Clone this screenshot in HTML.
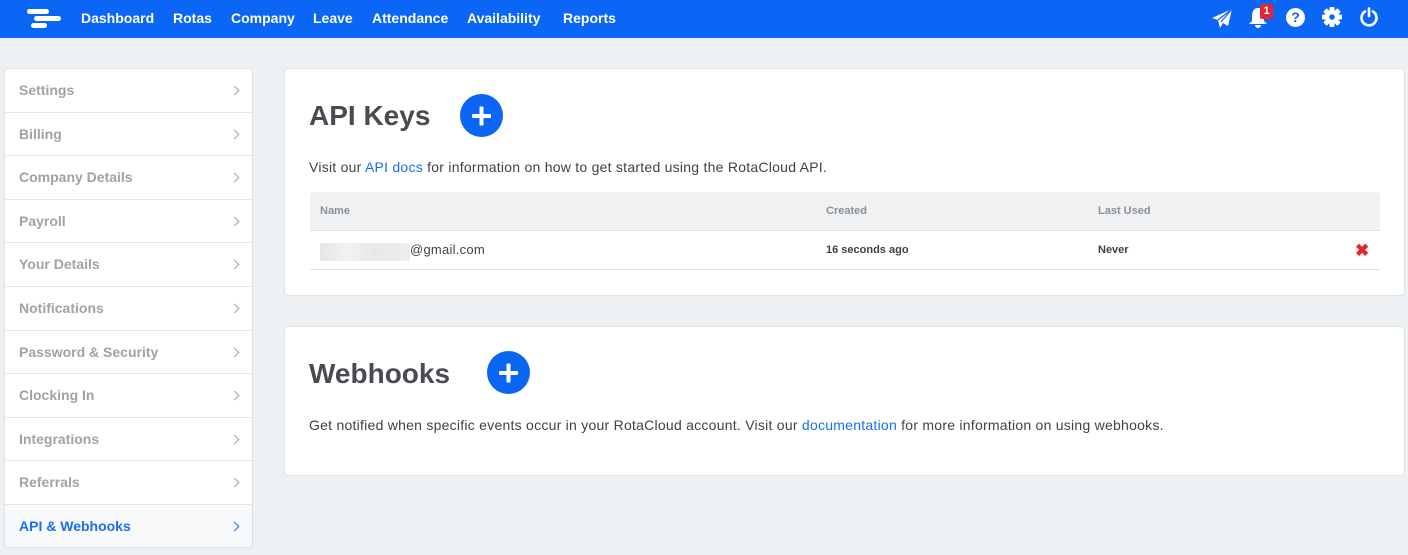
<!DOCTYPE html>
<html><head><meta charset="utf-8"><style>
*{box-sizing:border-box;margin:0;padding:0}
body{width:1408px;height:555px;background:#edf1f4;font-family:"Liberation Sans",sans-serif;overflow:hidden;position:relative}
.top{position:absolute;left:0;top:0;width:1408px;height:38px;background:#0b66f6}
.nav{position:absolute;top:10px;color:#fff;font-weight:bold;font-size:14px}
.side{position:absolute;left:4px;top:68px;width:249px;height:480px;background:#fff;border:1px solid #dde2e6;border-radius:4px;overflow:hidden}
.it{height:43.6px;border-bottom:1px solid #e3e7ea;padding-left:14px;line-height:42px;font-size:14px;color:#9ea3a8;font-weight:bold;position:relative}
.it:after{content:"";position:absolute;right:14px;top:18px;width:6px;height:6px;border-right:1.3px solid #9ea3a8;border-top:1.3px solid #9ea3a8;transform:rotate(45deg)}
.it.act{background:#f7f9fb;color:#1a6ff0;border-bottom:none}
.it.act:after{border-color:#1a6ff0}
.card{position:absolute;left:284px;width:1121px;background:#fff;border:1px solid #dde2e6;border-radius:4px}
h1{position:absolute;font-size:28px;color:#484c50;font-weight:bold}
.plus{position:absolute;width:43px;height:43px;border-radius:50%;background:#0b66f6}
.plus:before,.plus:after{content:"";position:absolute;background:#fff;left:12px;top:19.5px;width:19px;height:4px;border-radius:1px}
.plus:after{transform:rotate(90deg)}
.p{position:absolute;font-size:14px;color:#3e4246;letter-spacing:0.25px}
a{color:#1a6ff0;text-decoration:none}
.th{position:absolute;left:25px;top:123px;width:1070px;height:39px;background:#eff1f3;border-radius:4px 4px 0 0;border-bottom:1px solid #dfe2e5}
.small{position:absolute;font-size:11px;font-weight:bold}
</style></head><body>
<div class="top">
<svg style="position:absolute;left:27px;top:9px" width="36" height="20" viewBox="0 0 36 20"><g fill="#fff"><rect x="0" y="0" width="22" height="5" rx="2.5"/><rect x="7" y="7" width="27" height="5" rx="2.5"/><rect x="4" y="14" width="16" height="5" rx="2.5"/></g></svg>
<span class="nav" style="left:81px">Dashboard</span><span class="nav" style="left:173px">Rotas</span><span class="nav" style="left:231px">Company</span><span class="nav" style="left:313px">Leave</span><span class="nav" style="left:372px">Attendance</span><span class="nav" style="left:467px">Availability</span><span class="nav" style="left:563px">Reports</span>
<svg style="position:absolute;left:1211px;top:8px" width="22" height="21" viewBox="0 0 22 21"><path d="M21 1 L1 10 L7 12 L9 20 L12 15 L17 18 Z" fill="#fff"/><path d="M7 12 L21 1 L10 14" stroke="#0b66f6" stroke-width="1.2" fill="none"/></svg>
<svg style="position:absolute;left:1248px;top:7px" width="20" height="22" viewBox="0 0 20 22"><path d="M10 1 C5 1 4 6 4 10 L4 14 L1 17 L19 17 L16 14 L16 10 C16 6 15 1 10 1Z M7 18 a3 3 0 0 0 6 0Z" fill="#fff"/></svg>
<div style="position:absolute;left:1260px;top:4px;width:13px;height:15px;background:#e52630;border-radius:2px;color:#fff;font-size:11px;font-weight:bold;text-align:center;line-height:15px">1</div>
<div style="position:absolute;left:1286px;top:8px;width:19px;height:19px;border-radius:50%;background:#fff;color:#0b66f6;font-weight:bold;font-size:14px;text-align:center;line-height:19px">?</div>
<svg style="position:absolute;left:1322px;top:7px" width="20" height="20" viewBox="0 0 20 20"><g fill="#fff" transform="translate(10 10)"><rect x="-2.5" y="-10" width="5" height="20" rx="1"/><rect x="-2.5" y="-10" width="5" height="20" rx="1" transform="rotate(45)"/><rect x="-2.5" y="-10" width="5" height="20" rx="1" transform="rotate(90)"/><rect x="-2.5" y="-10" width="5" height="20" rx="1" transform="rotate(135)"/><circle r="7"/></g><circle cx="10" cy="10" r="2.8" fill="#0b66f6"/></svg>
<svg style="position:absolute;left:1359px;top:7px" width="20" height="20" viewBox="0 0 20 20"><path d="M6 4.5 A7.5 7.5 0 1 0 14 4.5" stroke="#fff" stroke-width="2.6" fill="none" stroke-linecap="round"/><line x1="10" y1="1.5" x2="10" y2="9" stroke="#fff" stroke-width="2.6" stroke-linecap="round"/></svg>
</div>
<div class="side">
<div class="it">Settings</div><div class="it">Billing</div><div class="it">Company Details</div><div class="it">Payroll</div><div class="it">Your Details</div><div class="it">Notifications</div><div class="it">Password &amp; Security</div><div class="it">Clocking In</div><div class="it">Integrations</div><div class="it">Referrals</div><div class="it act">API &amp; Webhooks</div>
</div>
<div class="card" style="top:68px;height:228px">
<h1 style="left:24px;top:31px">API Keys</h1><div class="plus" style="left:175px;top:25px"></div>
<div class="p" style="left:24px;top:90px">Visit our <a>API docs</a> for information on how to get started using the RotaCloud API.</div>
<div class="th"></div>
<span class="small" style="left:35px;top:136px;color:#8d9196">Name</span>
<span class="small" style="left:541px;top:136px;color:#8d9196">Created</span>
<span class="small" style="left:813px;top:136px;color:#8d9196">Last Used</span>
<div style="position:absolute;left:35px;top:174px;width:90px;height:18px;background:linear-gradient(90deg,#e6e6e6,#f2f2f2 30%,#e8e8e8 60%,#eee)"></div>
<div class="p" style="left:125px;top:173px;font-size:13px">@gmail.com</div>
<span class="small" style="left:541px;top:175px;color:#3e4246">16 seconds ago</span>
<span class="small" style="left:813px;top:175px;color:#3e4246">Never</span>
<div style="position:absolute;left:1070px;top:172px;color:#e52630;font-size:17px;font-weight:bold">✖</div>
<div style="position:absolute;left:25px;top:200px;width:1070px;height:1px;background:#dfe2e5"></div>
</div>
<div class="card" style="top:326px;height:150px">
<h1 style="left:24px;top:31px">Webhooks</h1><div class="plus" style="left:202px;top:24px"></div>
<div class="p" style="left:24px;top:90px">Get notified when specific events occur in your RotaCloud account. Visit our <a>documentation</a> for more information on using webhooks.</div>
</div>
</body></html>
